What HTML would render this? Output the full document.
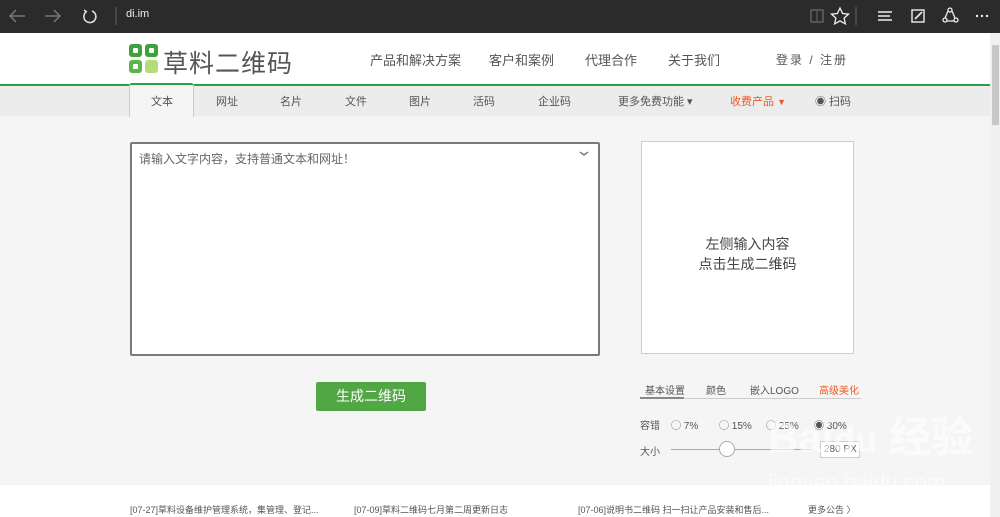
<!DOCTYPE html><html><head><meta charset="utf-8"><style>
*{margin:0;padding:0;box-sizing:border-box}
body{width:1000px;height:517px;overflow:hidden;font-family:"Liberation Sans","Noto Sans CJK SC",sans-serif;background:#f5f5f5;position:relative;color:#555}
.a{position:absolute;white-space:nowrap}
</style></head><body>
<div class="a" style="left:0;top:0;width:1000px;height:33px;background:#2b2b2b"></div>
<svg class="a" style="left:0;top:0" width="1000" height="33">
<g stroke="#777" stroke-width="1.5" fill="none"><path d="M25 16H10M16 10l-6 6 6 6"/><path d="M45 16h15M54 10l6 6-6 6"/></g>
<g stroke="#ddd" stroke-width="1.6" fill="none"><path d="M92 11a6 6 0 1 1-6 1"/><path d="M84 10l3 2"/></g>
<line x1="116" y1="7" x2="116" y2="25" stroke="#666"/>
<rect x="811" y="10" width="12" height="12" fill="none" stroke="#666" stroke-width="1.4"/><line x1="817" y1="10" x2="817" y2="22" stroke="#666"/>
<path d="M840 8l2.6 5.5 5.9.6-4.4 4 1.3 5.8-5.4-3-5.4 3 1.3-5.8-4.4-4 5.9-.6z" fill="none" stroke="#eee" stroke-width="1.3"/>
<line x1="856" y1="7" x2="856" y2="25" stroke="#666"/>
<g stroke="#eee" stroke-width="1.4"><path d="M878 12h14M878 16h12M878 20h14"/></g>
<rect x="912" y="10" width="12" height="12" fill="none" stroke="#eee" stroke-width="1.4"/><path d="M915 19l7-7" stroke="#eee" stroke-width="1.6"/>
<g fill="none" stroke="#eee" stroke-width="1.3"><circle cx="950" cy="10" r="2"/><circle cx="945" cy="20" r="2"/><circle cx="956" cy="20" r="2"/><path d="M948 11l-3 7M952 11l3 7M947 21h7"/></g>
<g fill="#eee"><circle cx="977" cy="16" r="1.2"/><circle cx="982" cy="16" r="1.2"/><circle cx="987" cy="16" r="1.2"/></g>
</svg>
<div class="a" style="left:126px;top:8px;font-size:11px;color:#eee">di.im</div>
<div class="a" style="left:0;top:33px;width:990px;height:51px;background:#fff"></div>
<div class="a" style="left:0;top:84px;width:990px;height:2px;background:#2e9e4c"></div>
<div class="a" style="left:0;top:86px;width:990px;height:30px;background:#ececec"></div>
<div class="a" style="left:990px;top:33px;width:10px;height:484px;background:#f0f0f0"></div>
<div class="a" style="left:992px;top:45px;width:7px;height:80px;background:#c8c8c8"></div>
<svg class="a" style="left:129px;top:44px" width="30" height="30"><rect x="0" y="0" width="13" height="13" rx="3" fill="#3ea13a"/><rect x="4" y="4" width="5" height="5" rx="1" fill="#fff"/><rect x="16" y="0" width="13" height="13" rx="3" fill="#3ea13a"/><rect x="20" y="4" width="5" height="5" rx="1" fill="#fff"/><rect x="0" y="16" width="13" height="13" rx="3" fill="#5cb54a"/><rect x="4" y="20" width="5" height="5" rx="1" fill="#fff"/><rect x="16" y="16" width="13" height="13" rx="3" fill="#b5dc77"/></svg>
<div class="a" style="left:163px;top:44px;font-size:25px;color:#555;letter-spacing:1px">草料二维码</div>
<div class="a" style="left:370px;top:50px;font-size:13px;color:#555">产品和解决方案</div>
<div class="a" style="left:489px;top:50px;font-size:13px;color:#555">客户和案例</div>
<div class="a" style="left:585px;top:50px;font-size:13px;color:#555">代理合作</div>
<div class="a" style="left:668px;top:50px;font-size:13px;color:#555">关于我们</div>
<div class="a" style="left:776px;top:51px;font-size:12px;color:#555;letter-spacing:2px">登录 / 注册</div>
<div class="a" style="left:129px;top:83px;width:65px;height:34px;background:#f5f5f5;border:1px solid #ccc;border-top:2px solid #2e9e4c;border-bottom:none;border-radius:3px 3px 0 0"></div>
<div style="font-size:11px;color:#555">
<div class="a" style="left:151px;top:93px">文本</div>
<div class="a" style="left:216px;top:93px">网址</div>
<div class="a" style="left:280px;top:93px">名片</div>
<div class="a" style="left:345px;top:93px">文件</div>
<div class="a" style="left:409px;top:93px">图片</div>
<div class="a" style="left:473px;top:93px">活码</div>
<div class="a" style="left:538px;top:93px">企业码</div>
<div class="a" style="left:618px;top:93px">更多免费功能 ▾</div>
<div class="a" style="left:730px;top:93px;color:#f05a22">收费产品 <span style="font-size:9px">▼</span></div>
<div class="a" style="left:815px;top:93px">◉ 扫码</div>
</div>
<div class="a" style="left:130px;top:142px;width:470px;height:214px;background:#fff;border:2px solid #7a7a7a;border-radius:2px"></div>
<div class="a" style="left:139px;top:150px;font-size:12px;color:#666">请输入文字内容，支持普通文本和网址！</div>
<svg class="a" style="left:579px;top:150px" width="10" height="8"><path d="M1 2l4 3 4-3" stroke="#666" fill="none" stroke-width="1.2"/></svg>
<div class="a" style="left:316px;top:382px;width:110px;height:29px;background:#52a745;border-radius:2px;color:#fff;font-size:14px;text-align:center;line-height:29px">生成二维码</div>
<div class="a" style="left:641px;top:141px;width:213px;height:213px;background:#fff;border:1px solid #ccc"></div>
<div class="a" style="left:641px;top:234px;width:213px;text-align:center;font-size:14px;line-height:20px;color:#444">左侧输入内容<br>点击生成二维码</div>
<div style="font-size:10px;color:#555">
<div class="a" style="left:645px;top:382px">基本设置</div>
<div class="a" style="left:706px;top:382px">颜色</div>
<div class="a" style="left:750px;top:382px">嵌入LOGO</div>
<div class="a" style="left:819px;top:382px;color:#f05a22">高级美化</div>
<div class="a" style="left:640px;top:398px;width:221px;height:1px;background:#ccc"></div>
<div class="a" style="left:640px;top:397px;width:44px;height:2px;background:#888"></div>
<div class="a" style="left:640px;top:417px">容错</div>
<div class="a" style="left:671px;top:417px">◯ 7%</div>
<div class="a" style="left:719px;top:417px">◯ 15%</div>
<div class="a" style="left:766px;top:417px">◯ 25%</div>
<div class="a" style="left:814px;top:417px">◉ 30%</div>
<div class="a" style="left:640px;top:443px">大小</div>
<div class="a" style="left:671px;top:449px;width:140px;height:1px;background:#aaa"></div>
<div class="a" style="left:719px;top:441px;width:16px;height:16px;border-radius:50%;background:#fff;border:1px solid #aaa"></div>
<div class="a" style="left:820px;top:441px;width:40px;height:17px;border:1px solid #ccc;background:#fff;padding-left:3px;line-height:15px">280 PX</div>
</div>
<div class="a" style="left:768px;top:404px;font-size:42px;color:rgba(255,255,255,.6);font-weight:bold">Bai<span style="font-size:36px">du</span> 经验</div>
<div class="a" style="left:768px;top:470px;font-size:22px;color:rgba(255,255,255,.6)">jingyan.baidu.com</div>
<div class="a" style="left:0;top:485px;width:990px;height:32px;background:#fff"></div>
<div style="font-size:9px;color:#555">
<div class="a" style="left:130px;top:503px">[07-27]草料设备维护管理系统，集管理、登记...</div>
<div class="a" style="left:354px;top:503px">[07-09]草料二维码七月第二周更新日志</div>
<div class="a" style="left:578px;top:503px">[07-06]说明书二维码 扫一扫让产品安装和售后...</div>
<div class="a" style="left:808px;top:503px">更多公告 〉</div>
</div>
</body></html>
